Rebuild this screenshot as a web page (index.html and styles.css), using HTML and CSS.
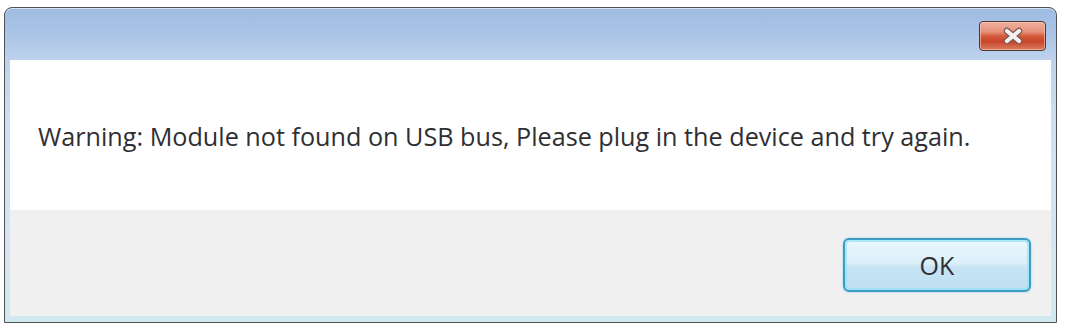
FILE: index.html
```html
<!DOCTYPE html>
<html lang="en">
<head>
<meta charset="utf-8">
<title>Warning</title>
<link rel="stylesheet" href="styles.css">
</head>
<body>
<div class="window">
  <div class="titlebar">
    <div class="close-btn">
      <svg class="close-x" width="24" height="18" viewBox="0 0 24 18">
        <path d="M6 4 L18 14 M18 4 L6 14" stroke="#7a5550" stroke-width="6.5" stroke-linecap="round"/>
        <path d="M6 4 L18 14 M18 4 L6 14" stroke="#f4f0f0" stroke-width="4.2" stroke-linecap="round"/>
      </svg>
    </div>
  </div>
  <div class="client">
    <div class="message">
      <p class="message-text">Warning: Module not found on USB bus, Please plug in the device and try again.</p>
    </div>
    <div class="footer">
      <button class="ok-btn">OK</button>
    </div>
  </div>
</div>
</body>
</html>
```
FILE: styles.css
```css
html, body {
  margin: 0;
  padding: 0;
  background: #ffffff;
}
body {
  width: 1065px;
  height: 331px;
  overflow: hidden;
  font-family: "Open Sans", "Noto Sans", "Liberation Sans", sans-serif;
}
.window {
  box-sizing: border-box;
  margin: 7px 0 0 4px;
  width: 1053px;
  height: 316px;
  border: 1px solid #4f5258;
  border-radius: 8px 8px 0 0;
  padding: 0 5px 6px 5px;
  display: flex;
  flex-direction: column;
  background: linear-gradient(to bottom, #9fbbe0 0px, #a9c4e6 25px, #bed2ec 52px, #cfe0f1 120px, #d6e7f2 260px, #cfe9ef 316px);
  box-shadow: inset 0 1px 0 rgba(255,255,255,0.55);
}
.titlebar {
  height: 52px;
  flex: none;
  display: flex;
  justify-content: flex-end;
  align-items: flex-start;
}
.close-btn {
  box-sizing: border-box;
  width: 67px;
  height: 30px;
  margin-top: 13px;
  margin-right: 5px;
  border: 1px solid #4d3838;
  border-radius: 4px;
  background: linear-gradient(to bottom, #eeb09e 0%, #e6917b 35%, #d45b3c 50%, #c8462a 70%, #db7d61 100%);
  box-shadow: inset 0 0 0 1px rgba(255,210,195,0.55);
  display: flex;
  align-items: center;
  justify-content: center;
}
.close-x {
  display: block;
}
.client {
  flex: 1;
  display: flex;
  flex-direction: column;
  background: #f0f0f0;
}
.message {
  height: 150px;
  flex: none;
  background: #ffffff;
  display: flex;
  align-items: center;
  padding-left: 28px;
}
.message-text {
  margin: 0;
  padding-top: 2px;
  font-size: 25.2px;
  color: #2f2f33;
  white-space: nowrap;
}
.footer {
  flex: 1;
  display: flex;
  justify-content: flex-end;
  align-items: flex-start;
  padding: 28px 20px 0 0;
}
.ok-btn {
  box-sizing: border-box;
  width: 188px;
  height: 54px;
  border: 2px solid #3c9cc4;
  border-radius: 6px;
  background: linear-gradient(to bottom, #eaf6fc 0%, #dcf0fa 45%, #c6e4f4 55%, #bfe0f2 100%);
  box-shadow: 0 0 2px rgba(60,170,210,0.6), inset 0 0 0 2px rgba(150,225,250,0.7);
  font-family: "Open Sans", "Noto Sans", "Liberation Sans", sans-serif;
  font-size: 25px;
  color: #2f2f33;
  padding: 0;
  cursor: default;
}
```
